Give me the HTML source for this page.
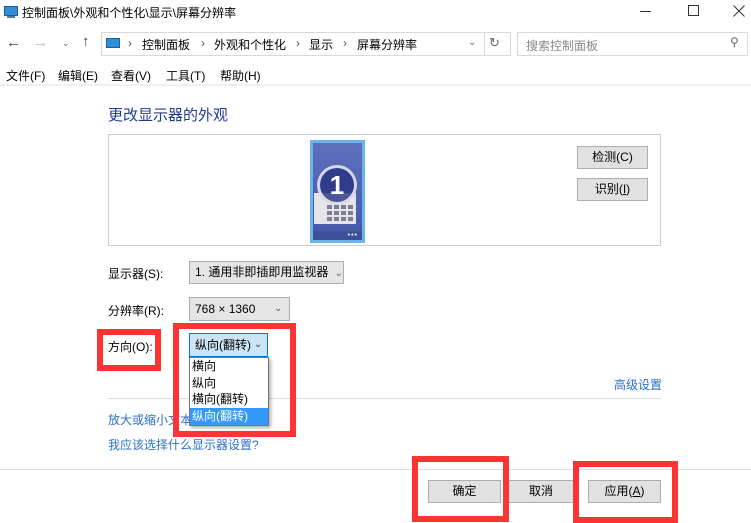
<!DOCTYPE html>
<html><head><meta charset="utf-8"><style>
*{margin:0;padding:0;box-sizing:border-box}
body{width:751px;height:523px;overflow:hidden;background:#fff;font-family:"Liberation Sans","Noto Sans CJK SC",sans-serif;font-size:12px;color:#000;position:relative}
.a{position:absolute;white-space:nowrap}
.btn{position:absolute;background:#e1e1e1;border:1px solid #adadad;text-align:center;font-size:12px}
.sel{position:absolute;background:#e5e5e5;border:1px solid #adadad;font-size:12px;padding-left:5px}
.lnk{color:#2a6fc9}
.red{position:absolute;border:6px solid #ff3333}
</style></head><body>
<div class="a" style="left:4px;top:6px;width:14px;height:10px;background:#2f8fd8;border:1px solid #1a5fa0"></div>
<div class="a" style="left:7px;top:16px;width:8px;height:2px;background:#5a7a9a"></div>
<div class="a" style="left:22px;top:4px;font-size:12px">控制面板\外观和个性化\显示\屏幕分辨率</div>
<div class="a" style="left:640px;top:11px;width:11px;height:1px;background:#333"></div>
<div class="a" style="left:688px;top:5px;width:11px;height:11px;border:1px solid #333"></div>
<svg class="a" style="left:733px;top:5px" width="12" height="12"><path d="M0.5 0.5L11.5 11.5M11.5 0.5L0.5 11.5" stroke="#333" stroke-width="1"/></svg>
<div class="a" style="left:6px;top:34px;font-size:15px;color:#444">←</div>
<div class="a" style="left:33px;top:34px;font-size:15px;color:#bbb">→</div>
<div class="a" style="left:62px;top:38px;font-size:9px;color:#666">⌄</div>
<div class="a" style="left:82px;top:33px;font-size:15px;color:#444">↑</div>
<div class="a" style="left:101px;top:32px;width:410px;height:24px;border:1px solid #d9d9d9"></div>
<div class="a" style="left:106px;top:38px;width:14px;height:10px;background:#2f8fd8;border:1px solid #1a5fa0"></div>
<div class="a" style="left:128px;top:36px;color:#555">›</div>
<div class="a" style="left:142px;top:36px">控制面板</div>
<div class="a" style="left:201px;top:36px;color:#555">›</div>
<div class="a" style="left:214px;top:36px">外观和个性化</div>
<div class="a" style="left:296px;top:36px;color:#555">›</div>
<div class="a" style="left:309px;top:36px">显示</div>
<div class="a" style="left:343px;top:36px;color:#555">›</div>
<div class="a" style="left:357px;top:36px">屏幕分辨率</div>
<div class="a" style="left:468px;top:37px;font-size:10px;color:#666">⌄</div>
<div class="a" style="left:484px;top:32px;width:1px;height:24px;background:#d9d9d9"></div>
<div class="a" style="left:489px;top:35px;font-size:13px;color:#666">↻</div>
<div class="a" style="left:517px;top:32px;width:231px;height:24px;border:1px solid #d9d9d9"></div>
<div class="a" style="left:526px;top:37px;font-size:12px;color:#888">搜索控制面板</div>
<div class="a" style="left:730px;top:35px;font-size:12px;color:#666">⚲</div>
<div class="a" style="left:6px;top:67px">文件(F)</div>
<div class="a" style="left:58px;top:67px">编辑(E)</div>
<div class="a" style="left:111px;top:67px">查看(V)</div>
<div class="a" style="left:166px;top:67px">工具(T)</div>
<div class="a" style="left:220px;top:67px">帮助(H)</div>
<div class="a" style="left:0;top:84px;width:751px;height:2px;background:#f0f0f0"></div>
<div class="a" style="left:108px;top:104px;font-size:15px;color:#1e3c8c">更改显示器的外观</div>
<div class="a" style="left:108px;top:134px;width:553px;height:112px;border:1px solid #ccc"></div>
<div class="a" style="left:310px;top:140px;width:55px;height:103px;background:#6cb4ea;padding:3px">
 <div style="width:49px;height:97px;background:linear-gradient(#5d6fbd,#4657a8);position:relative">
  <div style="position:absolute;left:0;bottom:0;width:49px;height:9px;background:#3d4e9a"></div>
  <div style="position:absolute;right:4px;bottom:1px;font-size:7px;color:#fff;letter-spacing:1px">•••</div>
  <div style="position:absolute;left:1px;top:50px;width:42px;height:31px;background:#e4e4ea"></div>
  <div style="position:absolute;left:14px;top:62px;width:26px;height:16px;background:repeating-linear-gradient(90deg,#7c7f92 0 5px,transparent 5px 7px),#e4e4ea;-webkit-mask:repeating-linear-gradient(#000 0 4px,transparent 4px 6px)"></div>
  <div style="position:absolute;left:4px;top:22px;width:40px;height:40px;border-radius:50%;background:rgba(40,50,130,.8);border:3px solid rgba(240,242,250,.85);color:#fff;font-size:26px;font-weight:bold;text-align:center;line-height:34px">1</div>
 </div>
</div>
<div class="btn" style="left:577px;top:146px;width:71px;height:23px;line-height:21px">检测(C)</div>
<div class="btn" style="left:577px;top:178px;width:71px;height:23px;line-height:21px">识别(<u>I</u>)</div>
<div class="a" style="left:108px;top:265px">显示器(S):</div>
<div class="sel" style="left:189px;top:261px;width:155px;height:23px;line-height:21px">1. 通用非即插即用监视器 <span style="color:#666;font-size:10px">&nbsp;⌄</span></div>
<div class="a" style="left:108px;top:302px">分辨率(R):</div>
<div class="sel" style="left:189px;top:297px;width:101px;height:24px;line-height:22px">768 × 1360<span style="position:absolute;left:84px;color:#666;font-size:10px">⌄</span></div>
<div class="a" style="left:108px;top:338px">方向(O):</div>
<div class="sel" style="left:189px;top:333px;width:79px;height:24px;line-height:22px;background:#cce4f7;border-color:#0078d7">纵向(翻转)<span style="position:absolute;left:64px;color:#444;font-size:10px">⌄</span></div>
<div class="a" style="left:108px;top:398px;width:553px;height:1px;background:#ddd"></div>
<div class="a lnk" style="left:614px;top:376px">高级设置</div>
<div class="a lnk" style="left:108px;top:411px">放大或缩小文本</div>
<div class="a lnk" style="left:108px;top:436px">我应该选择什么显示器设置?</div>
<div class="a" style="left:189px;top:357px;width:80px;height:69px;background:#fff;border:1px solid #777;box-shadow:2px 2px 3px rgba(0,0,0,.3)">
<div style="height:16.5px;line-height:16px;padding-left:2px">横向</div>
<div style="height:16.5px;line-height:16px;padding-left:2px">纵向</div>
<div style="height:16.5px;line-height:16px;padding-left:2px">横向(翻转)</div>
<div style="height:17px;line-height:16px;padding-left:2px;background:#3399ff;color:#fff">纵向(翻转)</div>
</div>
<div class="a" style="left:0;top:469px;width:751px;height:1px;background:#ddd"></div>
<div class="btn" style="left:428px;top:480px;width:73px;height:23px;line-height:21px">确定</div>
<div class="btn" style="left:508px;top:480px;width:66px;height:23px;line-height:21px">取消</div>
<div class="btn" style="left:588px;top:480px;width:73px;height:23px;line-height:21px">应用(<u>A</u>)</div>
<div class="red" style="left:97px;top:329px;width:64px;height:42px"></div>
<div class="red" style="left:173px;top:323px;width:123px;height:114px"></div>
<div class="red" style="left:412px;top:456px;width:97px;height:66px"></div>
<div class="red" style="left:573px;top:461px;width:105px;height:62px"></div>
</body></html>
